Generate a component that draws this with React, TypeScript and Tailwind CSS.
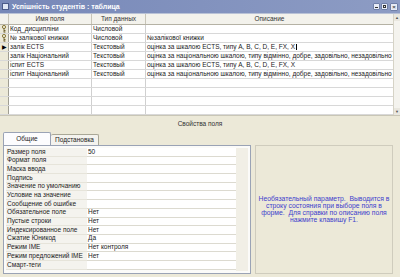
import React from 'react';

const fields = [
  { name: 'Код_дисципліни', type: 'Числовой', desc: '', key: true },
  { name: '№ залікової книжки', type: 'Числовой', desc: '№залікової книжки', key: true },
  { name: 'залік ECTS', type: 'Текстовый', desc: 'оцінка за шкалою ECTS, типу A, B, C, D,  E, FX, X', current: true },
  { name: 'залік Національний', type: 'Текстовый', desc: 'оцінка за національною шкалою, типу відмінно, добре, задовільно, незадовільно' },
  { name: 'іспит ECTS', type: 'Текстовый', desc: 'оцінка за шкалою ECTS, типу A, B, C, D,  E, FX, X' },
  { name: 'іспит Національний', type: 'Текстовый', desc: 'оцінка за національною шкалою, типу відмінно, добре, задовільно, незадовільно' },
  { name: '', type: '', desc: '' },
  { name: '', type: '', desc: '' },
  { name: '', type: '', desc: '' },
  { name: '', type: '', desc: '' },
];

const props = [
  ['Размер поля', '50'],
  ['Формат поля', ''],
  ['Маска ввода', ''],
  ['Подпись', ''],
  ['Значение по умолчанию', ''],
  ['Условие на значение', ''],
  ['Сообщение об ошибке', ''],
  ['Обязательное поле', 'Нет'],
  ['Пустые строки', 'Нет'],
  ['Индексированное поле', 'Нет'],
  ['Сжатие Юникод', 'Да'],
  ['Режим IME', 'Нет контроля'],
  ['Режим предложений IME', 'Нет'],
  ['Смарт-теги', ''],
];

const KeyIcon = () => (
  <svg width="6" height="8" viewBox="0 0 6 8">
    <circle cx="3" cy="2" r="1.6" fill="none" stroke="#8a7a3a" strokeWidth="1" />
    <path d="M3 3.5V7.5M3 5.5H4.5M3 7H4.5" stroke="#6b5e2a" strokeWidth="0.9" />
  </svg>
);

export default function App() {
  return (
    <div
      className="w-[400px] h-[277px] overflow-hidden bg-[#ece9d8] flex flex-col text-[6.5px] leading-none text-[#222]"
      style={{ fontFamily: '"Liberation Sans", Arial, sans-serif' }}
    >
      {/* title bar */}
      <div className="h-[13px] flex items-center bg-gradient-to-r from-[#7788b8] to-[#8d9cc4] px-[2px] shrink-0">
        <div className="w-[7px] h-[7px] bg-[#dfe6f5] border border-[#4a5a8a] mr-[3px]" />
        <span className="text-white font-bold text-[7px] flex-1">Успішність студентів : таблица</span>
        <div className="flex gap-[1px] items-center">
          <div className="w-[7px] h-[7px] rounded-[1px] bg-[#e8ecf6] border border-[#7080a8] flex items-end justify-center pb-[1px]">
            <div className="w-[3px] h-[1px] bg-[#333]" />
          </div>
          <div className="w-[7px] h-[7px] rounded-[1px] bg-[#e8ecf6] border border-[#7080a8] flex items-center justify-center">
            <div className="w-[3px] h-[3px] border border-[#333]" />
          </div>
          <div className="w-[8px] h-[8px] ml-[1px] rounded-[1px] bg-[#e8ecf6] border border-[#7080a8] flex items-center justify-center text-[6px] font-bold text-[#444]">
            ×
          </div>
        </div>
      </div>

      {/* design grid */}
      <div className="flex bg-white border-t border-[#b9c2d6] shrink-0">
        <div className="flex-1 flex flex-col">
          <div className="flex h-[11px] bg-[#f3f2ec] border-b border-[#b5b2a4] text-[#333]">
            <div className="w-[9px] border-r border-[#c8c5b8]" />
            <div className="w-[83px] border-r border-[#c8c5b8] flex items-center justify-center">Имя поля</div>
            <div className="w-[54px] border-r border-[#c8c5b8] flex items-center justify-center">Тип данных</div>
            <div className="flex-1 flex items-center justify-center">Описание</div>
          </div>
          {fields.map((f, i) => (
            <div key={i} className="flex h-[9px] border-b border-[#d8d8d8]">
              <div className="w-[9px] bg-[#ece9d8] border-r border-[#9f9d92] flex items-center justify-center">
                {f.key && <KeyIcon />}
                {f.current && <span className="text-[6px] text-black">▶</span>}
              </div>
              <div className="w-[83px] border-r border-[#d0d0d0] flex items-center pl-[1px]">{f.name}</div>
              <div className="w-[54px] border-r border-[#d0d0d0] flex items-center pl-[1px]">{f.type}</div>
              <div className="flex-1 flex items-center pl-[1px] whitespace-nowrap overflow-hidden">
                {f.desc}
                {f.current && <span className="inline-block w-[1px] h-[6px] bg-black ml-[1px]" />}
              </div>
            </div>
          ))}
        </div>
        <div className="w-[7px] bg-[#f4f3ee] border-l border-[#d6d3c6] flex flex-col justify-between">
          <div className="h-[7px] bg-[#e9e7df] flex items-center justify-center text-[4px] text-[#555]">▲</div>
          <div className="h-[7px] bg-[#e9e7df] flex items-center justify-center text-[4px] text-[#555]">▼</div>
        </div>
      </div>

      {/* properties label */}
      <div className="h-[17px] flex items-center justify-center border-t border-[#c9c6b6] text-[#333] shrink-0">
        Свойства поля
      </div>

      {/* bottom area */}
      <div className="flex-1 flex px-[3px] pb-[3px] gap-[4px]">
        <div className="w-[248px] flex flex-col">
          <div className="flex h-[13px] items-end">
            <div className="w-[48px] h-[13px] bg-[#fcfcfe] border border-b-0 border-[#9aa3b5] rounded-t-[2px] flex items-center justify-center">
              Общие
            </div>
            <div className="w-[48px] h-[11px] bg-[#f4f3ee] border border-b-0 border-l-0 border-[#a9a796] rounded-t-[2px] flex items-center justify-center">
              Подстановка
            </div>
          </div>
          <div className="flex-1 bg-[#fbfbf9] border border-[#9aa3b5] p-[2px] flex">
            <div className="flex-1 flex flex-col">
              {props.map(([k, v]) => (
                <div key={k} className="flex h-[8.7px]">
                  <div className="w-[81px] flex items-center pl-[1px] border-b border-[#e6e4da] bg-[#f4f3ee]">{k}</div>
                  <div className="flex-1 flex items-center pl-[1px] bg-white border-b border-[#dcdad0]">{v}</div>
                </div>
              ))}
            </div>
            <div className="w-[12px] bg-[#f1efe6]" />
          </div>
        </div>
        <div className="flex-1 mt-[13px] mr-[4px] border border-[#cfccbd] bg-[#ece9d8] flex items-center justify-center pb-[2px]">
          <p className="text-center text-[#4040cc] text-[6.8px] leading-[7px] whitespace-nowrap">
            Необязательный параметр.&nbsp; Выводится в<br />
            строку состояния при выборе поля в<br />
            форме.&nbsp; Для справки по описанию поля<br />
            нажмите клавишу F1.
          </p>
        </div>
      </div>
    </div>
  );
}
